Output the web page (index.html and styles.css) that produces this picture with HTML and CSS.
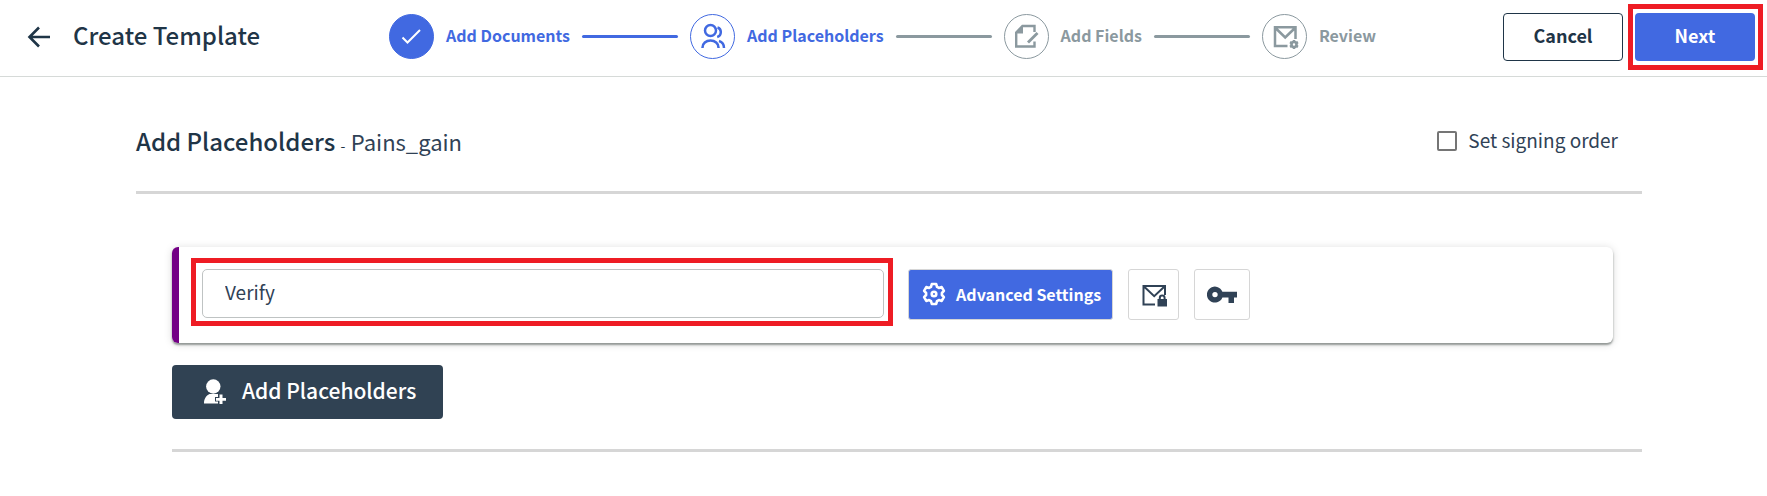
FILE: index.html
```html
<!DOCTYPE html>
<html lang="en">
<head>
  <meta charset="UTF-8" />
  <meta name="viewport" content="width=device-width, initial-scale=1.0" />
  <title>Create Template</title>
  <link rel="stylesheet" href="styles.css">
</head>
<body>
  <header class="topbar">
    <div class="topbar-left">
      <button class="back" type="button" aria-label="Back">
        <svg width="32" height="32" viewBox="0 0 32 32" fill="none" stroke="currentColor" stroke-width="2.6">
          <path d="M27 16H7M16 6.5L6.5 16l9.500 9.500" />
        </svg>
      </button>
      <h1 class="title">Create Template</h1>
    </div>

    <ol class="steps">
      <li class="step done">
        <span class="step-icon">
          <svg width="45" height="45" viewBox="0 0 45 45" fill="none" stroke="currentColor" stroke-width="2">
            <path d="M13.500 23.500l5 5L31 16" />
          </svg>
        </span>
        <span class="step-label">Add Documents</span>
      </li>
      <li class="step active">
        <span class="step-icon">
          <svg width="45" height="45" viewBox="0 0 45 45" fill="none" stroke="currentColor" stroke-width="2.500">
            <circle cx="20.500" cy="16.500" r="5.500" />
            <path d="M12.500 34v-.5c0-4 3.500-7 8-7s8 3 8 7v.5M27.500 13.500c2 .6 3.300 2.200 3.300 4.500s-1.300 4.300-3.600 5M29 27c3.200 1 5 3.700 5 7" />
          </svg>
        </span>
        <span class="step-label">Add Placeholders</span>
      </li>
      <li class="step">
        <span class="step-icon">
          <svg width="45" height="45" viewBox="0 0 45 45" fill="none" stroke="currentColor" stroke-width="2.400">
            <path d="M30.500 18v-6H18.500L12.200 18.500V32.500h18.300v-5" />
            <path d="M11 19.500l8-8.500v8.500z" fill="currentColor" stroke="none" />
            <path d="M24 28.500L33.500 19" stroke-width="2.800" />
          </svg>
        </span>
        <span class="step-label">Add Fields</span>
      </li>
      <li class="step">
        <span class="step-icon">
          <svg width="45" height="45" viewBox="0 0 45 45" fill="none" stroke="currentColor" stroke-width="2.500">
            <path d="M25.500 32H13V13.200h20.500V25M13.500 14l9.700 9.500L33 14" />
            <circle cx="32" cy="30.500" r="2.500" stroke-width="2.600" />
            <path d="M32 26v2M32 33v2M28 28.200l1.800 1M34.200 31.800l1.800 1M28 32.800l1.800-1M34.200 29.200l1.800-1" />
          </svg>
        </span>
        <span class="step-label">Review</span>
      </li>
    </ol>

    <div class="topbar-actions">
      <button class="btn btn-outline" type="button">Cancel</button>
      <div class="highlight highlight-next">
        <button class="btn btn-primary" type="button">Next</button>
      </div>
    </div>
  </header>

  <main class="content">
    <div class="section-head">
      <h2 class="section-title">Add Placeholders <small class="dash">-</small> <span class="template-name">Pains_gain</span></h2>
      <div class="order">
        <input id="signing-order" type="checkbox" />
        <label for="signing-order">Set signing order</label>
      </div>
    </div>

    <section class="placeholders">
      <div class="card">
        <div class="highlight highlight-name">
          <input class="name-input" type="text" value="Verify" aria-label="Placeholder name" />
        </div>
        <button class="settings" type="button">
          <svg width="24" height="24" viewBox="0 0 24 24" fill="none" stroke="currentColor" stroke-width="2.600">
            <path d="M9.800 2h4.400l.8 2.800 1.900 1.100 2.800-.8 2.200 3.800-2 2.100v2l2 2.100-2.200 3.800-2.800-.8-1.900 1.100-.8 2.800H9.800L9 19.200l-1.900-1.100-2.800.8-2.200-3.800 2-2.100v-2l-2-2.100 2.200-3.800 2.800.8L9 4.800z" stroke-linejoin="round" />
            <circle cx="12" cy="12" r="2.300" />
          </svg>
          Advanced Settings
        </button>
        <button class="icon-btn" type="button" aria-label="Email authentication">
          <svg width="26" height="24" viewBox="0 0 26 24" fill="none" stroke="currentColor" stroke-width="2">
            <path d="M14 21.500H2.500V3H24v9M3 3.500l10.200 9.700L23.500 3.500" />
            <path d="M16.500 16H26v7.500h-9.500z" fill="currentColor" stroke="none" />
            <path d="M18.800 16.500v-1.500a2.400 2.400 0 0 1 4.800 0v1.500" />
          </svg>
        </button>
        <button class="icon-btn icon-btn-wide" type="button" aria-label="Access code">
          <svg width="30" height="18" viewBox="0 0 30 18" fill="currentColor">
            <path fill-rule="evenodd" d="M15.400 5.800A8 8 0 1 0 15.400 11.400H21.500V17h5.500v-5.600h3V5.800zM8 11.300a2.700 2.700 0 1 1 0-5.400 2.700 2.700 0 0 1 0 5.400z" />
          </svg>
        </button>
      </div>

      <button class="add-btn" type="button">
        <svg width="24" height="26" viewBox="0 0 24 26" fill="currentColor">
          <circle cx="10.300" cy="7.500" r="7.200" />
          <path d="M1 24.500c0-4.500 2-8 5.500-9.500h8.500v3h-3v4.500h3v2z" />
          <path d="M16.500 15.500h3v3.500H23v2.800h-3.500v3.200h-3v-3.200H13V19h3.500z" />
        </svg>
        <span class="add-label">Add Placeholders</span>
      </button>
    </section>
  </main>
</body>
</html>
```
FILE: styles.css
```css
* {
  box-sizing: border-box;
}
body {
  margin: 0;
  font-family: "Noto Sans CJK SC", sans-serif;
  color: #304256;
  background-color: #fff;
}
button,
input {
  font-family: inherit;
}
button {
  cursor: pointer;
}
svg {
  display: block;
  flex: none;
}

/* top bar */
.topbar {
  display: grid;
  grid-template-columns: 1fr auto 1fr;
  align-items: center;
  padding: 13px 12px 15px;
  border-bottom: 1px solid #d6dad8;
}
.topbar-left {
  display: flex;
  align-items: center;
  gap: 18px;
  padding-left: 11px;
}
.back {
  padding: 0;
  border: none;
  background: none;
  color: #1f3547;
}
.title {
  margin: 0;
  padding-bottom: 4px;
  font-size: 24px;
  line-height: 32px;
  font-weight: 500;
  color: #1f3547;
}
.topbar-actions {
  display: flex;
  justify-content: flex-end;
  gap: 12px;
}
.btn {
  width: 120px;
  height: 48px;
  padding: 0 0 4px;
  border-radius: 4px;
  font-size: 18px;
  font-weight: 700;
}
.btn-outline {
  border: 1px solid #1f3547;
  background-color: #fff;
  color: #1f3547;
}
.btn-primary {
  border: none;
  background-color: #4169e1;
  color: #fff;
  display: block;
}

/* stepper */
.steps {
  display: flex;
  gap: 12px;
  margin: 0;
  padding: 0 2px 1px 0;
  list-style: none;
}
.step {
  display: flex;
  align-items: center;
  gap: 12px;
  color: #8b999f;
}
.step:not(:last-child)::after {
  content: "";
  width: 96px;
  height: 3px;
  border-radius: 2px;
  background-color: currentColor;
}
.step-icon {
  width: 45px;
  height: 45px;
  border: 1px solid currentColor;
  border-radius: 50%;
  display: flex;
  align-items: center;
  justify-content: center;
}
.step-label {
  padding-bottom: 3px;
  font-size: 16px;
  line-height: 24px;
  font-weight: 700;
}
.step.done,
.step.active {
  color: #4169e1;
}
.step.active::after {
  background-color: #8b999f;
}
.step.done .step-icon {
  border-color: #4169e1;
  background-color: #4169e1;
  color: #fff;
}

/* red call-out frames */
.highlight {
  position: relative;
}
.highlight::after {
  content: "";
  position: absolute;
  border: 5px solid #ee1c24;
  pointer-events: none;
}
.highlight-next::after {
  inset: -9px -8px -9px -7px;
}
.highlight-name::after {
  inset: -11px -9px -8px -11px;
}

/* content */
.content {
  margin: 0 125px 0 136px;
}
.section-head {
  display: flex;
  align-items: center;
  justify-content: space-between;
  padding: 47px 24px 33px 0;
  border-bottom: 3px solid #d6d6d6;
}
.section-title {
  margin: 0;
  font-size: 24px;
  line-height: 34px;
  font-weight: 500;
  color: #1f3547;
}
.dash {
  font-size: 14px;
  line-height: 1;
  font-weight: 400;
}
.template-name {
  font-size: 22px;
  line-height: 1;
  font-weight: 400;
  color: #304256;
}
.order {
  display: flex;
  align-items: center;
  gap: 11px;
  font-size: 19px;
  line-height: 28px;
}
.order label {
  padding-bottom: 3px;
}
.order input {
  appearance: none;
  width: 20px;
  height: 20px;
  margin: 0;
  border: 2px solid #757575;
  border-radius: 2px;
}
.placeholders {
  margin-left: 36px;
  padding: 53px 0 30px;
  border-bottom: 3px solid #d6d6d6;
}
.card {
  display: flex;
  align-items: flex-start;
  gap: 15px;
  margin: 0 29px 22px 0;
  padding: 22px 19px 23px 23px;
  border-left: 7px solid #730085;
  border-radius: 6px;
  box-shadow: 0 2px 2px rgba(60, 70, 65, 0.5), 0 1px 8px rgba(0, 0, 0, 0.15);
}
.highlight-name {
  width: 49%;
  margin-right: 9px;
}
.name-input {
  display: block;
  width: 100%;
  height: 49px;
  padding: 0 22px 4px;
  border: 1px solid #bfc3c3;
  border-radius: 5px;
  font-size: 19px;
  color: #304256;
}
.settings {
  display: flex;
  align-items: center;
  gap: 10px;
  height: 51px;
  padding: 0 11px 1px 13px;
  border: 1px solid #d6d6d6;
  border-radius: 3px;
  background-color: #4169e1;
  color: #fff;
  font-size: 16px;
  font-weight: 700;
  white-space: nowrap;
}
.icon-btn {
  display: flex;
  align-items: center;
  justify-content: center;
  width: 51px;
  height: 51px;
  padding: 0;
  border: 1px solid #d6d6d6;
  border-radius: 3px;
  background-color: #fff;
  color: #304256;
}
.icon-btn-wide {
  width: 56px;
}
.add-btn {
  display: flex;
  align-items: center;
  gap: 15px;
  height: 54px;
  padding: 0 27px 0 31px;
  border: none;
  border-radius: 4px;
  background-color: #304253;
  color: #fff;
}
.add-label {
  padding-bottom: 4px;
  font-size: 21px;
  line-height: 28px;
  font-weight: 500;
}
```
